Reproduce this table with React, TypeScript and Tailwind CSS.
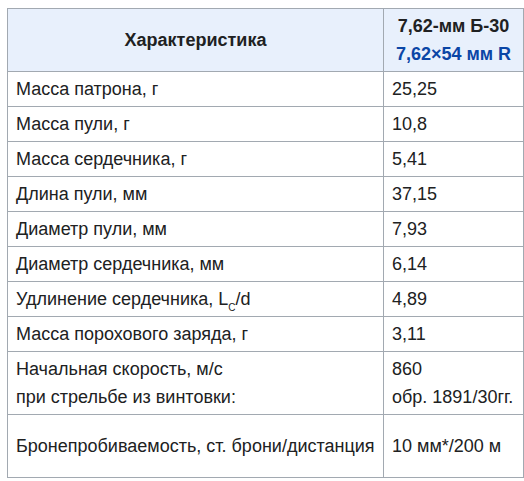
import React from "react";

type Row = {
  label: React.ReactNode;
  value: React.ReactNode;
  tall?: boolean;
};

const rows: Row[] = [
  { label: "Масса патрона, г", value: "25,25" },
  { label: "Масса пули, г", value: "10,8" },
  { label: "Масса сердечника, г", value: "5,41" },
  { label: "Длина пули, мм", value: "37,15" },
  { label: "Диаметр пули, мм", value: "7,93" },
  { label: "Диаметр сердечника, мм", value: "6,14" },
  {
    label: (
      <>
        Удлинение сердечника, L<sub className="text-[10px] align-[-3px]">C</sub>/d
      </>
    ),
    value: "4,89",
  },
  { label: "Масса порохового заряда, г", value: "3,11" },
  {
    label: (
      <>
        Начальная скорость, м/с
        <br />
        при стрельбе из винтовки:
      </>
    ),
    value: (
      <>
        860
        <br />
        обр. 1891/30гг.
      </>
    ),
  },
  {
    label: "Бронепробиваемость, ст. брони/дистанция",
    value: "10 мм*/200 м",
    tall: true,
  },
];

export default function App() {
  return (
    <div className="bg-white w-[524px] h-[481px] pt-2 pl-[7px] font-['Liberation_Sans',Arial,sans-serif] text-[18px] leading-7 text-[#202122]">
      <table className="table-fixed border-collapse w-[516px]">
        <colgroup>
          <col className="w-[376px]" />
          <col className="w-[140px]" />
        </colgroup>
        <thead>
          <tr className="bg-[#e8f0fc]">
            <th className="border border-[#a2a9b1] py-[3px] px-2 h-[63px] text-center font-bold">
              Характеристика
            </th>
            <th className="border border-[#a2a9b1] py-[3px] px-2 text-center font-bold">
              7,62-мм Б-30
              <br />
              <span className="text-[#0b46a6]">7,62×54 мм R</span>
            </th>
          </tr>
        </thead>
        <tbody>
          {rows.map((row, index) => (
            <tr key={index} className={row.tall ? "h-[63px]" : "h-[35px]"}>
              <td className="border border-[#a2a9b1] py-[3px] px-2 align-middle whitespace-nowrap">
                {row.label}
              </td>
              <td className="border border-[#a2a9b1] py-[3px] px-2 align-middle whitespace-nowrap">
                {row.value}
              </td>
            </tr>
          ))}
        </tbody>
      </table>
    </div>
  );
}
